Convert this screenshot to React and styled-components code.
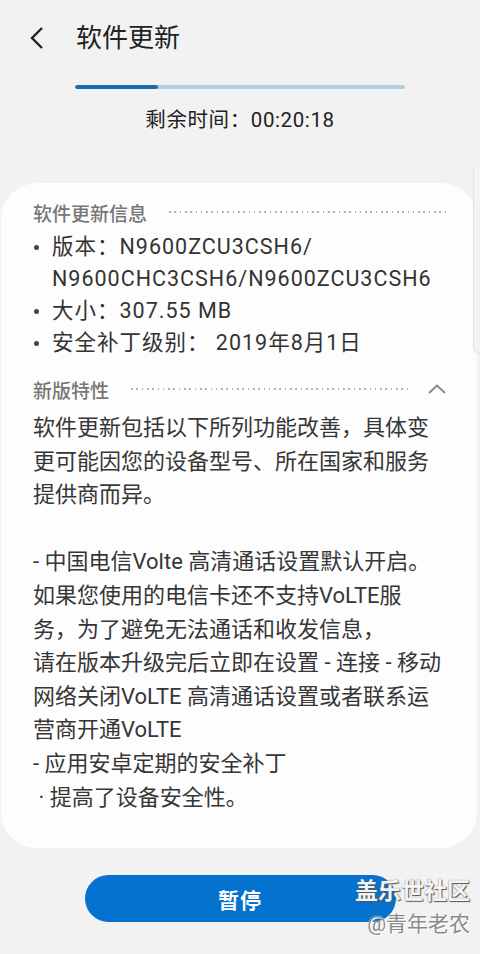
import React from "react";
import styled, { createGlobalStyle } from "styled-components";

const Global = createGlobalStyle`
  html, body { margin: 0; padding: 0; background: #f2f2f2; }
  body { font-family: Roboto, "Noto Sans CJK SC", "Noto Sans", sans-serif; -webkit-font-smoothing: antialiased; }
  * { box-sizing: border-box; }
`;

const Page = styled.div`
  position: relative;
  width: 480px;
  height: 954px;
  overflow: hidden;
  background: #f2f2f2;
  display: flex;
  flex-direction: column;
`;

const Header = styled.header`
  height: 76px;
  display: flex;
  align-items: center;
  padding-left: 29px;
`;

const BackButton = styled.div`
  width: 16px;
  height: 24px;
  display: flex;
  align-items: center;
  justify-content: center;
  margin-right: 31px;
`;

const Title = styled.h1`
  margin: 0;
  font-size: 26px;
  font-weight: 400;
  color: #222;
  line-height: 32px;
`;

const Track = styled.div`
  margin: 9px 0 0 75px;
  width: 330px;
  height: 4px;
  border-radius: 2px;
  background: #b2cce2;
  overflow: hidden;
`;

const Fill = styled.div`
  height: 100%;
  background: #1a6eb0;
  border-radius: 2px;
`;

const Remaining = styled.div`
  margin-top: 17px;
  text-align: center;
  font-size: 20.5px;
  letter-spacing: 0.6px;
  line-height: 28px;
  color: #222;
`;

const Card = styled.section`
  margin: 49px 3px 0 1px;
  background: #fdfdfd;
  border-radius: 36px;
  padding: 17px 31px 34px 32px;
`;

const SectionHead = styled.div`
  display: flex;
  align-items: center;
  height: 24px;
  margin-top: ${(p) => p.$top || 0}px;
`;

const HeadText = styled.span`
  font-size: 19px;
  font-weight: 500;
  color: #767676;
  white-space: nowrap;
`;

const Dots = styled.div`
  flex: 1;
  height: 2px;
  margin-left: 22px;
  margin-right: ${(p) => p.$right || 0}px;
  background-image: repeating-linear-gradient(
    to right,
    #b0b0b0 0 1.6px,
    transparent 1.6px 5.3px
  );
`;

const List = styled.ul`
  list-style: none;
  margin: 7px 0 0 0;
  padding: 0;
`;

const Item = styled.li`
  position: relative;
  padding-left: 19px;
  font-size: 21.5px;
  letter-spacing: 1px;
  line-height: 32px;
  color: #333;
  white-space: nowrap;
  &::before {
    content: "";
    position: absolute;
    left: 1px;
    top: 14px;
    width: 5px;
    height: 5px;
    border-radius: 50%;
    background: #444;
  }
`;

const Para = styled.div`
  margin-top: 10px;
  font-size: 22px;
  line-height: 33.6px;
  color: #363636;
`;

const Line = styled.div`
  white-space: pre;
  height: 33.6px;
`;

const ButtonBar = styled.div`
  display: flex;
  justify-content: center;
  margin-top: 27px;
`;

const PauseButton = styled.button`
  width: 311px;
  height: 47px;
  border: none;
  border-radius: 24px;
  background: #0672d0;
  color: #fff;
  font-family: inherit;
  font-size: 21px;
  font-weight: 700;
  letter-spacing: 1px;
  padding: 0;
`;

const Scrollbar = styled.div`
  position: absolute;
  right: -6px;
  top: 166px;
  width: 13px;
  height: 188px;
  background: #f3f3f3;
  border: 1px solid #e2e2e2;
  border-radius: 0 0 7px 7px;
  border-top: none;
`;

const Watermark = styled.div`
  position: absolute;
  right: 10px;
  top: 877px;
  display: flex;
  flex-direction: column;
  align-items: flex-end;
  pointer-events: none;
`;

const WmBrand = styled.span`
  font-size: 23px;
  font-weight: 700;
  color: #f4f4f4;
  line-height: 30px;
  text-shadow: 1px 1px 1px #555, 0 0 1px #666;
`;

const WmUser = styled.span`
  font-size: 21px;
  color: #8a8a8a;
  line-height: 28px;
  margin-top: 3px;
  text-shadow: 0 0 1px #fff, 1px 1px 0 #fff;
`;

const Chevron = () => (
  <svg width="18" height="10" viewBox="0 0 18 10">
    <path d="M1 9 L9 1.5 L17 9" fill="none" stroke="#8a8a8a" strokeWidth="2" />
  </svg>
);

const BackIcon = () => (
  <svg width="16" height="24" viewBox="0 0 16 24">
    <path d="M13 2 L3 12 L13 22" fill="none" stroke="#222" strokeWidth="2.4" />
  </svg>
);

const lines = [
  "软件更新包括以下所列功能改善，具体变",
  "更可能因您的设备型号、所在国家和服务",
  "提供商而异。",
  "",
  "- 中国电信Volte 高清通话设置默认开启。",
  "如果您使用的电信卡还不支持VoLTE服",
  "务，为了避免无法通话和收发信息，",
  "请在版本升级完后立即在设置 - 连接 - 移动",
  "网络关闭VoLTE 高清通话设置或者联系运",
  "营商开通VoLTE",
  "- 应用安卓定期的安全补丁",
  " · 提高了设备安全性。",
];

export default function App() {
  const progress = 0.25;
  return (
    <Page>
      <Global />
      <Header>
        <BackButton>
          <BackIcon />
        </BackButton>
        <Title>软件更新</Title>
      </Header>
      <Track>
        <Fill style={{ width: `${progress * 100}%` }} />
      </Track>
      <Remaining>剩余时间：00:20:18</Remaining>
      <Card>
        <SectionHead>
          <HeadText>软件更新信息</HeadText>
          <Dots />
        </SectionHead>
        <List>
          <Item>版本：N9600ZCU3CSH6/<br />N9600CHC3CSH6/N9600ZCU3CSH6</Item>
          <Item>大小：307.55 MB</Item>
          <Item>安全补丁级别： 2019年8月1日</Item>
        </List>
        <SectionHead $top={18}>
          <HeadText>新版特性</HeadText>
          <Dots $right={19} />
          <Chevron />
        </SectionHead>
        <Para>
          {lines.map((l, i) => (
            <Line key={i}>{l}</Line>
          ))}
        </Para>
      </Card>
      <ButtonBar>
        <PauseButton>暂停</PauseButton>
      </ButtonBar>
      <Scrollbar />
      <Watermark>
        <WmBrand>盖乐世社区</WmBrand>
        <WmUser>@青年老农</WmUser>
      </Watermark>
    </Page>
  );
}
